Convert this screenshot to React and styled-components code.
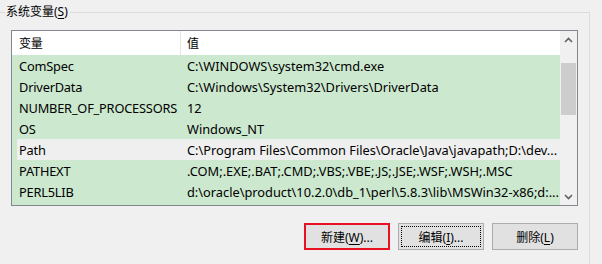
import React from 'react'
import styled, { createGlobalStyle } from 'styled-components'

const GlobalStyle = createGlobalStyle`
  html, body {
    margin: 0;
    padding: 0;
    background: #f0f0f0;
  }
  body {
    font-family: "Noto Sans", "Noto Sans CJK SC", sans-serif;
    font-size: 12px;
    color: #000;
  }
`

const Page = styled.div`
  width: 602px;
  height: 264px;
  overflow: hidden;
  padding-top: 12px;
  box-sizing: border-box;
`

const Group = styled.div`
  position: relative;
  width: 590px;
  box-sizing: border-box;
  border-top: 1px solid #dcdcdc;
  border-right: 1px solid #dcdcdc;
  padding: 17px 12px 20px 11px;
`

const GroupTitle = styled.div`
  position: absolute;
  top: -9px;
  left: 5px;
  padding: 0 2px 0 1px;
  background: #f0f0f0;
  line-height: 16px;
`

const Key = styled.span`
  text-decoration: underline;
  text-underline-offset: 2px;
`

const ListBox = styled.div`
  display: flex;
  width: 567px;
  height: 176px;
  box-sizing: border-box;
  border: 1px solid #828790;
  background: #cce8cf;
`

const ListBody = styled.div`
  flex: 1;
  min-width: 0;
  overflow: hidden;
`

const Row = styled.div`
  display: grid;
  grid-template-columns: 168px 1px 1fr;
  height: ${p => (p.$header ? 24 : 21)}px;
  align-items: center;
  background: ${p =>
    p.$header
      ? '#ffffff'
      : p.$hot
        ? 'linear-gradient(to right, #cce8cf 5px, #efefef 5px)'
        : '#cce8cf'};
  font-size: ${p => (p.$header ? 12 : 12.8)}px;
`

const Cell = styled.div`
  padding-left: ${p => (p.$first ? 7 : 6)}px;
  letter-spacing: ${p => (p.$first ? '-0.2px' : 'normal')};
  white-space: nowrap;
  overflow: hidden;
`

const Divider = styled.div`
  height: 100%;
  background: ${p => (p.$show ? '#e5e5e5' : 'transparent')};
`

const ScrollBar = styled.div`
  width: 17px;
  display: flex;
  flex-direction: column;
  align-items: center;
  background: #f0f0f0;
`

const Arrow = styled.div`
  height: 17px;
  width: 17px;
  display: flex;
  align-items: center;
  justify-content: center;
`

const Track = styled.div`
  flex: 1;
  width: 15px;
  padding-top: 15px;
`

const Thumb = styled.div`
  width: 15px;
  height: 52px;
  background: #cdcdcd;
`

const Buttons = styled.div`
  display: flex;
  justify-content: flex-end;
  gap: 8px;
  width: 567px;
  margin-top: 17px;
`

const Button = styled.div`
  width: 86px;
  height: 27px;
  box-sizing: border-box;
  display: flex;
  align-items: center;
  justify-content: center;
  background: #e1e1e1;
  border: ${p => (p.$marked ? '2px solid #e81123' : '1px solid #adadad')};
  position: relative;
  padding-top: 1px;
`

const FocusRect = styled.div`
  position: absolute;
  inset: 2px;
  border: 1px dotted #000;
  pointer-events: none;
`

const Chevron = ({ down }) => (
  <svg width="9" height="6" viewBox="0 0 9 6">
    <path
      d={down ? 'M1 1 L4.5 4.5 L8 1' : 'M1 5 L4.5 1.5 L8 5'}
      fill="none"
      stroke="#606060"
      strokeWidth="1.6"
    />
  </svg>
)

const rows = [
  ['ComSpec', 'C:\\WINDOWS\\system32\\cmd.exe'],
  ['DriverData', 'C:\\Windows\\System32\\Drivers\\DriverData'],
  ['NUMBER_OF_PROCESSORS', '12'],
  ['OS', 'Windows_NT'],
  ['Path', 'C:\\Program Files\\Common Files\\Oracle\\Java\\javapath;D:\\dev...', true],
  ['PATHEXT', '.COM;.EXE;.BAT;.CMD;.VBS;.VBE;.JS;.JSE;.WSF;.WSH;.MSC'],
  ['PERL5LIB', 'd:\\oracle\\product\\10.2.0\\db_1\\perl\\5.8.3\\lib\\MSWin32-x86;d:...'],
]

export default function App() {
  return (
    <Page>
      <GlobalStyle />
      <Group>
        <GroupTitle>
          系统变量(<Key>S</Key>)
        </GroupTitle>
        <ListBox>
          <ListBody>
            <Row $header>
              <Cell $first>变量</Cell>
              <Divider $show />
              <Cell>值</Cell>
            </Row>
            {rows.map(([name, value, hot]) => (
              <Row key={name} $hot={hot}>
                <Cell $first>{name}</Cell>
                <Divider />
                <Cell>{value}</Cell>
              </Row>
            ))}
          </ListBody>
          <ScrollBar>
            <Arrow>
              <Chevron />
            </Arrow>
            <Track>
              <Thumb />
            </Track>
            <Arrow>
              <Chevron down />
            </Arrow>
          </ScrollBar>
        </ListBox>
        <Buttons>
          <Button $marked>
            新建(<Key>W</Key>)...
          </Button>
          <Button>
            编辑(<Key>I</Key>)...
            <FocusRect />
          </Button>
          <Button>
            删除(<Key>L</Key>)
          </Button>
        </Buttons>
      </Group>
    </Page>
  )
}
